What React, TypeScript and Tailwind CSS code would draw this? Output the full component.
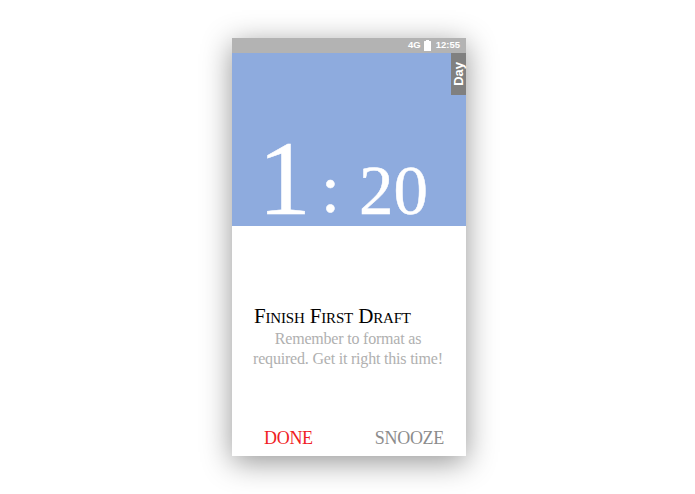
import React from "react";

const serif = "font-['Liberation_Serif',serif]";
const sans = "font-['Liberation_Sans',sans-serif]";

export default function App() {
  return (
    <div className="w-[695px] h-[494px] bg-white overflow-hidden pt-[38px] pl-[232px]">
      <div className="relative w-[234px] h-[418px] flex flex-col bg-white shadow-[0_6px_28px_rgba(0,0,0,0.42)]">
        {/* status bar */}
        <div className={`h-[15px] bg-[#b3b3b3] flex items-center justify-end gap-[5px] pr-[6px] text-[9.5px] font-bold text-white ${sans}`}>
          <span className="mr-[-2px]">4G</span>
          <svg width="7" height="11" viewBox="0 0 7 11" fill="white">
            <path d="M2 0h3v1h1.500a.5.5 0 0 1 .5.5V11H0V1.500A.5.5 0 0 1 .5 1H2z" />
          </svg>
          <span>12:55</span>
        </div>

        {/* countdown */}
        <div className={`relative h-[173px] bg-[#8eabde] flex items-end pl-[26px] text-white [-webkit-text-stroke:0.5px_white] ${serif}`}>
          <span className="text-[106px] leading-[106px] mb-[-6px]">1</span>
          <span className="text-[68px] leading-[68px] ml-[10px] mb-[3px]">:</span>
          <span className="text-[69px] leading-[69px] ml-[19px] mb-[0px]">20</span>
          <div className={`absolute top-0 right-0 w-[15px] h-[42px] bg-[#808080] flex items-center justify-center text-[13px] font-bold [-webkit-text-stroke:0] ${sans}`}>
            <span className="[writing-mode:vertical-rl] rotate-180">Day</span>
          </div>
        </div>

        {/* reminder text */}
        <div className={`flex-1 flex flex-col pt-[78px] pl-[22px] ${serif}`}>
          <h1 className="text-[21px] leading-[24px] tracking-[-0.17px] text-black [font-variant:small-caps]">Finish First Draft</h1>
          <p className="w-[200px] ml-[-6px] text-[16px] leading-[20px] tracking-[-0.2px] mt-[1px] text-center text-[#b0b0b0]">
            Remember to format as required. Get it right this time!
          </p>
        </div>

        {/* actions */}
        <div className={`h-[29px] flex items-start justify-between pl-[32px] pr-[22px] text-[18px] leading-[22px] tracking-[-0.3px] ${serif}`}>
          <span className="text-[#f01c24]">DONE</span>
          <span className="text-[#8c8c8c]">SNOOZE</span>
        </div>
      </div>
    </div>
  );
}
